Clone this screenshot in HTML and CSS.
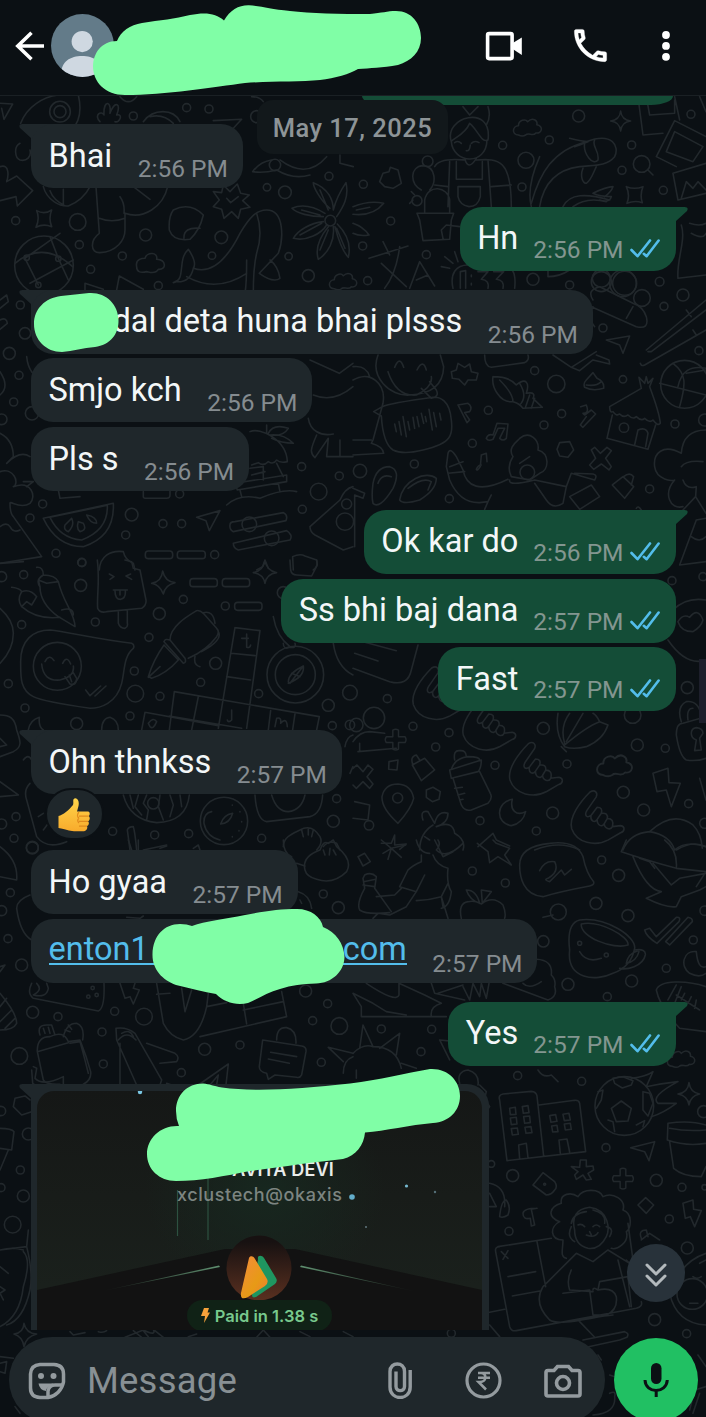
FILE: index.html
```html
<!DOCTYPE html>
<html lang="en">
<head>
<meta charset="utf-8">
<title>Chat</title>
<link rel="stylesheet" href="styles.css">
</head>
<body>
<svg width="0" height="0" class="defs">
  <defs>
    <symbol id="ticks" viewBox="0 0 30 19"><path d="M1.5 11L7.5 17.2L20 1.5M13.8 14.8L16.6 17.2L28.6 1.5" fill="none" stroke="#53bdeb" stroke-width="2.6" stroke-linejoin="round" stroke-linecap="round"/></symbol>
    <symbol id="tail-in" viewBox="0 0 36 30"><path d="M3.500 0H36V30H12V14L1 4Q-1 0 3.500 0Z" fill="#1f272b"/></symbol>
    <symbol id="tail-out" viewBox="0 0 36 30"><path d="M32.500 0H0V30H24V14L35 4Q37 0 32.500 0Z" fill="#144d37"/></symbol>
    <symbol id="star" viewBox="0 0 24 24" overflow="visible"><path d="M12 1Q13 11 23 12Q13 13 12 23Q11 13 1 12Q11 11 12 1Z"/></symbol>
    <symbol id="cloud" viewBox="0 0 30 20" overflow="visible"><path d="M6 18C-1 18 0 9 6 9C6 3 13 2 15 5C20 0 25 4 24 8C31 9 29 17 23 16C20 20 16 15 13 18C10 20 8 19 6 18Z"/></symbol>
    <symbol id="plus" viewBox="0 0 24 24" overflow="visible"><path d="M9 2Q12 0 15 2V9H22Q24 12 22 15H15V22Q12 24 9 22V15H2Q0 12 2 9H9Z"/></symbol>
    <symbol id="shaka" viewBox="0 0 54 54" overflow="visible"><path d="M20 2C25 -1 28 3 26 7L17 20C14 25 17 28 21 25C20 30 24 33 27 29C27 35 32 37 34 33C34 38 40 40 42 36L50 35C55 36 54 41 50 42L38 49C25 56 7 52 2 38C-1 27 10 12 20 2ZM21 25L27 17Q33 17 31 23L27 29M31 23Q38 22 37 28L34 33M37 28Q44 28 42 36"/></symbol>
  </defs>
</svg>
<main class="screen">
  <svg class="wallpaper" viewBox="0 0 706 1417" aria-hidden="true">
    <g transform="translate(0 0) scale(.3333)">
      <path d="M62 370C80 320 130 290 175 285M235 285C250 350 225 380 215 390M0 310L38 312L12 358L5 325M60 430C40 440 45 475 60 480C80 485 95 470 90 450M0 500C30 490 25 530 20 545L50 528L98 572L52 618L48 590L0 602M130 560C140 600 180 620 205 618C250 600 265 570 270 560M150 572Q160 600 195 617M190 568V614M288 560L298 700C270 720 270 760 300 758C350 755 375 720 375 690V640C430 660 490 620 503 560M298 655Q335 670 375 655M360 590Q375 610 372 640M400 560L450 598M300 365C280 345 305 330 312 345C310 300 335 300 330 340C345 300 365 310 350 345C370 340 360 370 345 365M430 365C460 325 520 325 540 365M450 350Q490 340 520 370M640 362L725 358L700 385M360 290Q385 320 410 290M110 632Q133 645 155 630Q145 655 155 680Q130 670 108 682Q120 655 110 632M520 630Q570 605 610 645Q600 690 570 718Q520 725 508 690Q505 650 520 630M552 715Q550 680 600 685M640 575L665 578L670 555L690 575L712 552L722 580L748 585L728 602L750 622L722 628L715 655L695 635L672 655L665 628L640 620L658 600ZM680 595L692 608L715 590M520 848C560 840 530 780 565 748C580 770 590 790 580 805C650 830 700 740 720 700C750 650 770 630 800 630C855 630 850 720 835 760L778 820Q820 850 840 835Q835 800 810 780M580 805Q570 850 525 845M560 830Q650 880 740 820M740 780Q740 850 735 880M770 640Q790 700 770 760Q760 800 760 880M990 625C960 600 940 560 940 548C985 565 1000 600 1000 630C1010 590 1030 560 1038 548C1048 590 1030 620 1010 650M970 650C930 650 890 640 876 625C910 610 950 625 975 640M970 665C930 670 895 690 880 715C920 725 965 700 980 675M985 680C960 710 945 745 955 778C985 760 1005 720 1000 680M1005 680C1015 720 1025 750 1045 772C1055 730 1035 695 1012 672M960 570L985 630M905 630L960 645M900 705L965 670M960 750L985 690M1035 745L1010 685M758 515Q780 485 815 480M830 510Q790 520 758 515M840 480Q920 540 980 470M830 510Q880 540 930 525M1020 465V490L1060 500M755 290Q780 290 790 305M45 790Q130 720 218 800M75 775L180 700M90 850L220 780M75 775L115 855M175 775L150 710M175 775L205 840"/>
      <path d="M255 870V850L310 868M350 870L358 828L430 868M410 800C405 775 430 775 435 775C440 755 475 755 470 778C500 780 500 810 475 808C465 825 445 815 440 815C420 820 410 815 410 800"/>
      <circle cx="180" cy="335" r="31"/><circle cx="180" cy="335" r="18"/><circle cx="560" cy="323" r="12"/><circle cx="627" cy="327" r="12"/><circle cx="400" cy="348" r="12"/><circle cx="770" cy="350" r="18"/><circle cx="987" cy="529" r="12"/><circle cx="801" cy="562" r="11"/><circle cx="855" cy="577" r="19"/><circle cx="825" cy="495" r="17"/><circle cx="47" cy="662" r="12"/><circle cx="233" cy="666" r="25"/><circle cx="238" cy="734" r="12"/><circle cx="367" cy="768" r="12"/><circle cx="437" cy="705" r="18"/><circle cx="272" cy="808" r="12"/><circle cx="664" cy="712" r="19"/><circle cx="636" cy="767" r="11"/><circle cx="991" cy="662" r="16"/><circle cx="866" cy="769" r="11"/><circle cx="925" cy="827" r="18"/><circle cx="475" cy="857" r="12"/><circle cx="132" cy="796" r="88"/><circle cx="80" cy="773" r="8"/><circle cx="175" cy="776" r="8"/><circle cx="115" cy="855" r="8"/>
      <use href="#cloud" x="985" y="810" width="90" height="65"/>
    </g>
    <g transform="translate(353 0) scale(.3333)">
      <path d="M295 425C270 350 420 310 405 420C385 430 375 390 350 370C335 405 300 415 295 425C300 490 400 500 402 420M305 428Q315 420 325 430M355 430Q365 420 378 428M340 452Q350 455 352 435M335 475Q345 515 370 475M245 500C260 470 330 480 335 480M370 480C440 475 475 480 475 620M290 485L285 620M405 480L415 620M310 485V538H388V485M315 560H382V590Q375 620 348 620Q320 615 315 590ZM245 555L285 560M415 560L475 555M330 320L350 345L375 320M405 320Q415 350 400 375M215 640V600C225 550 285 560 290 600V640M192 640H302L295 660L290 718L210 722L200 660ZM270 715L265 690L280 675L320 680M205 570C170 550 170 500 210 497C250 500 250 550 230 570M180 600L170 610M185 585L175 575M80 545L90 520L108 515L112 502L135 510L145 550L120 565L95 560ZM0 620Q50 600 92 610Q60 650 0 643M10 630L50 622M0 670Q30 680 48 705Q20 710 0 700M48 775L165 738M90 725L110 765M140 740Q130 820 95 865M85 790L160 860M170 865L200 785L245 858M190 840L225 825M265 800L290 805M275 770L300 790M305 755L315 785M300 865C290 820 310 795 345 795H440C480 795 490 820 485 865M560 470Q520 560 535 620M535 610C560 520 600 450 700 425C780 395 800 440 785 470C760 500 720 495 680 500C600 510 570 560 560 620M650 415Q690 425 705 425Q680 435 665 440M695 430C690 460 720 500 735 480C740 450 715 440 725 420M690 505C680 530 690 550 700 550C715 540 720 520 730 500M630 620C650 580 700 580 770 600M660 620Q700 590 760 605M740 600Q770 610 775 590Q740 590 720 580Q760 560 780 560Q775 575 755 590M820 560Q845 570 870 560Q860 585 868 608Q845 600 822 610Q832 585 820 560M855 290L870 405L930 400M965 290L980 360M880 290L890 345L965 340V300M965 362L1059 410M965 362L910 470L970 500M965 395L1050 440L1020 485L940 455ZM1059 490L960 520L975 600L1059 580M985 595L1000 545L1020 565L1035 545L1059 570M1040 290L1059 335M985 675C1000 720 970 780 975 835L1059 825M1010 670Q1040 680 1059 670M1015 700Q1050 720 1059 700M885 510L900 525M585 830V800M585 830Q620 830 650 810"/>
      <circle cx="677" cy="348" r="18"/><circle cx="449" cy="436" r="12"/><circle cx="589" cy="420" r="12"/><circle cx="519" cy="481" r="24"/><circle cx="507" cy="561" r="12"/><circle cx="836" cy="435" r="12"/><circle cx="807" cy="511" r="12"/><circle cx="866" cy="492" r="25"/><circle cx="931" cy="571" r="12"/><circle cx="1014" cy="343" r="12"/><circle cx="192" cy="602" r="15"/><circle cx="224" cy="484" r="16"/><circle cx="31" cy="553" r="12"/><circle cx="113" cy="663" r="12"/><circle cx="29" cy="738" r="12"/><circle cx="220" cy="764" r="12"/><circle cx="44" cy="842" r="12"/><circle cx="540" cy="838" r="18"/><circle cx="745" cy="835" r="27"/><circle cx="815" cy="850" r="36"/><circle cx="920" cy="845" r="13"/><circle cx="650" cy="855" r="12"/>
      <path d="M322 865V815L338 812V865M355 825V830M355 850V855M375 815H405L385 838Q410 840 405 865M422 815H452L430 838Q455 840 450 865"/>
      <use href="#cloud" x="478" y="348" width="92" height="65"/><use href="#star" x="770" y="330" width="66" height="66"/>
    </g>
    <g transform="translate(0 280) scale(.3333)">
      <path d="M80 230C85 280 110 290 125 300M0 60L20 45L25 65L0 85M0 120Q20 110 22 130L0 148M0 275Q30 320 0 345M925 415C930 450 960 470 1000 462M930 240L1018 280L1059 250M940 345Q1000 370 1059 320M950 465C930 510 930 520 945 533L985 475L980 530H1059M1020 530V480M800 435V460M750 455C780 440 860 480 862 545Q840 550 830 540Q820 555 805 545Q790 560 775 548L755 555M750 565L790 560V600M755 585L795 575M830 550L850 590M705 610L860 585V605L712 630ZM720 630L725 650M835 610L840 635M680 675Q720 640 780 655Q850 625 890 635M805 460Q820 430 865 445Q850 470 810 465Q850 460 880 490Q845 490 815 475M130 715L340 670Q345 770 250 800Q170 800 130 715M150 712L322 676Q325 750 245 780Q180 775 150 712M195 735Q190 750 205 755Q225 735 215 715ZM235 725Q228 745 240 755Q262 750 250 730ZM260 705Q270 730 290 730Q290 710 260 705M0 460Q40 480 40 530L20 550M0 575C40 560 60 610 40 620C95 600 110 650 90 670C60 690 30 660 30 670Q30 700 40 710L125 830L0 850M0 740Q20 725 30 740Q40 760 60 750M20 550Q60 510 90 530M70 605H100L80 620M175 630L180 655L240 650M430 635V650Q430 655 440 655H500Q510 655 510 645V630M590 712L660 692L628 752L618 722ZM298 870C300 830 330 810 370 815Q375 840 400 850L405 870M690 735Q690 725 705 725L850 698Q865 705 858 722L700 755Q688 750 690 735M700 790L860 752Q880 765 870 780L715 810Q700 805 700 790M930 740L1020 660Q1035 625 1059 620M930 740Q930 755 945 765L1030 810L1059 800M880 870L878 830Q900 820 915 828L950 840Q955 860 940 870M795 840L788 860L770 870M795 840L805 865"/>
      <rect x="436" y="813" width="82" height="23" rx="9"/><rect x="532" y="813" width="84" height="23" rx="9"/>
      <circle cx="644" cy="824" r="12"/><circle cx="61" cy="75" r="12"/><circle cx="28" cy="220" r="18"/><circle cx="57" cy="286" r="12"/><circle cx="75" cy="160" r="17"/><circle cx="41" cy="366" r="12"/><circle cx="96" cy="400" r="20"/><circle cx="5" cy="418" r="16"/><circle cx="128" cy="672" r="12"/><circle cx="90" cy="714" r="12"/><circle cx="395" cy="704" r="19"/><circle cx="377" cy="765" r="12"/><circle cx="489" cy="731" r="12"/><circle cx="545" cy="731" r="12"/><circle cx="168" cy="820" r="12"/><circle cx="245" cy="847" r="12"/><circle cx="905" cy="560" r="12"/><circle cx="1018" cy="588" r="12"/><circle cx="956" cy="635" r="25"/><circle cx="907" cy="688" r="12"/><circle cx="748" cy="733" r="22"/><circle cx="815" cy="775" r="22"/><circle cx="1035" cy="725" r="26"/><circle cx="1040" cy="672" r="15"/><circle cx="539" cy="642" r="12"/>
    </g>
    <g transform="translate(353 280) scale(.3333)">
      <path d="M75 225C50 290 110 350 170 345Q270 340 272 260L262 225M105 275Q130 350 190 345Q240 320 235 290M125 262Q140 225 152 262M192 270Q210 235 220 270M205 325L235 355Q260 350 250 330L230 305M88 380L62 395L85 408Q90 490 120 510Q150 525 210 510C300 490 300 460 295 420C290 360 260 350 240 352Q110 370 88 380M125 432L130 455M138 425L145 465M150 410L160 470M165 425L170 450M180 412L185 445M192 410L198 440M205 400L212 430M217 410L220 425M228 388L238 450M242 398L250 440M260 400L264 420M0 260Q40 255 50 290M0 300C50 270 100 310 90 370L60 480L55 490Q90 500 92 520L0 525M0 480H55M295 275L310 270L315 250L335 262L350 252L355 275L375 280L370 300L345 300L335 315L318 298L298 295ZM395 225Q395 260 415 262L515 248Q530 240 525 225M600 225L655 262L730 215M655 262L680 272L720 240L770 252L768 240L730 225M420 290Q470 290 490 315C520 290 530 310 520 340C545 335 545 345 540 355L568 382L510 385Q500 370 480 365C440 370 415 320 420 290M440 300Q480 340 480 365M500 310Q525 350 500 375M530 345L518 380M545 355L535 385M315 375L345 370Q360 380 350 395L335 398L350 420L342 428ZM400 475Q405 460 420 465L432 430L465 432L460 475Q450 485 440 475L450 455L455 445H435L420 478Q405 485 400 475M385 525L382 560Q372 575 370 568Q375 555 385 555M385 525L400 520L402 545M700 300L720 278L732 295Q755 305 752 325Q720 335 695 322Q690 310 700 300M700 315Q730 320 745 305M683 380L700 375Q710 400 690 400L695 405L715 390L728 402L690 442L682 435L700 410M865 325L770 380Q770 400 780 395Q790 410 800 402Q812 415 825 405Q840 420 850 410Q865 425 875 415Q890 430 900 420Q915 440 922 430Q920 400 890 320M865 325L858 292L875 310L880 290L885 310L900 295L890 320M778 405L762 475L885 508L908 435M845 495L855 450Q880 440 885 460L878 500M880 210L1059 60M885 215L895 215L1059 90M862 250Q865 260 875 255L1059 150M1000 90L1015 110M1020 150L1030 165M760 180L830 168L810 220L800 195ZM715 80L850 140Q890 150 880 110Q870 80 840 70L740 20Q700 30 720 60M720 80Q700 110 725 140M820 115L840 80M920 310L1059 345M960 250C1000 280 1000 310 980 380M1000 280L1059 270M975 320Q990 250 1059 265M1059 450Q990 450 985 520C930 490 900 520 905 560C910 600 960 605 965 600C930 640 950 690 990 680M985 560Q1000 540 1050 545M990 600Q1000 630 1030 620L1028 650L1059 700M1028 650L990 690M1030 720L1059 715M980 855L1030 720M980 855L1059 845M1015 770Q1040 790 1059 770M620 488L650 485L662 510L645 532L620 528L612 508ZM715 510L725 502L742 520L762 502L775 512L758 535L775 560L768 570L745 552L722 568L710 555L728 535ZM778 615L810 590L842 620L815 655ZM812 590Q830 575 842 590L835 615M285 520Q290 500 310 530L330 570C340 620 380 640 465 598M285 520L280 560L290 600Q320 670 380 668L405 665L415 645M290 560L330 545M285 580L335 575M405 665L395 688M470 600Q465 620 545 600L640 620L630 670Q600 690 580 660L545 610M640 620L655 580L725 600Q735 585 720 582L665 580M650 650L715 615L740 650L680 688ZM480 530C460 500 500 480 500 475C530 450 560 480 555 510C590 520 590 570 560 580L530 600L475 590Q460 560 480 530M500 550L530 530M60 610Q70 560 110 560Q145 570 120 625Q80 690 60 670Q55 650 60 610M75 610Q85 580 115 590M140 660C150 600 220 570 250 595Q250 630 200 660Q150 675 140 660M165 625Q210 590 235 605L225 630M0 625L35 640L30 655L5 645V800M850 685Q855 675 865 690"/>
      <circle cx="990" cy="45" r="18"/><circle cx="933" cy="79" r="12"/><circle cx="750" cy="144" r="12"/><circle cx="867" cy="54" r="25"/><circle cx="810" cy="10" r="40"/><circle cx="745" cy="5" r="30"/><circle cx="1038" cy="212" r="12"/><circle cx="545" cy="272" r="12"/><circle cx="610" cy="312" r="26"/><circle cx="810" cy="298" r="11"/><circle cx="626" cy="401" r="12"/><circle cx="573" cy="435" r="12"/><circle cx="406" cy="391" r="12"/><circle cx="358" cy="490" r="12"/><circle cx="184" cy="552" r="12"/><circle cx="21" cy="573" r="20"/><circle cx="289" cy="656" r="12"/><circle cx="966" cy="432" r="12"/><circle cx="890" cy="627" r="12"/><circle cx="995" cy="313" r="72"/><circle cx="813" cy="443" r="14"/><circle cx="523" cy="577" r="22"/><circle cx="1055" cy="420" r="18"/>
    </g>
    <g transform="translate(0 560) scale(.3333)">
      <path d="M292 0C300 60 290 110 293 145Q300 160 320 155L425 145Q440 135 438 120L420 30L400 25L395 5L375 0M355 155V190Q360 205 375 205Q385 200 382 190V153M328 42L342 50L330 58M392 42L378 48L395 58M340 90H382M345 92Q345 118 362 118Q378 115 376 92M360 92V105M110 22Q130 20 130 45Q105 60 120 80L115 60L140 70L175 65Q165 45 130 45M120 80Q120 130 175 170L225 200C225 160 190 130 175 65M35 82Q60 85 65 95Q50 120 65 140L80 125L95 135L110 110Q90 85 65 95M65 140Q110 180 180 172M185 150Q220 140 220 165M455 70Q485 65 488 33Q495 65 525 68Q495 75 490 102Q480 75 455 70M760 38Q790 32 795 2Q800 32 830 38Q800 42 795 70Q790 42 760 38M870 0L872 30Q875 45 890 45L935 48L952 15L950 0M0 10L70 5M62 310C60 240 100 210 150 210C200 215 280 235 395 250Q405 255 400 265C370 290 375 330 365 370C350 430 300 445 270 445C200 435 130 425 100 410C60 390 62 350 62 310M125 312Q130 365 180 360Q225 350 220 318M135 305Q148 280 162 302M188 310Q200 285 212 312M195 350L210 372Q230 378 230 355L218 335M208 345L215 365M257 390L270 407L302 378M285 408L318 378M445 350Q460 300 492 255L535 300Q500 340 455 355ZM445 352L480 320M492 245L550 310Q560 308 555 295L510 240Q495 235 492 245M510 240C510 200 560 170 590 152Q600 150 610 160L650 205Q660 215 650 230Q620 270 565 295M610 158Q640 150 645 190M655 215Q670 240 605 275M585 290Q580 315 600 320M705 203L780 212L740 505M705 203L655 505M693 280L765 287M680 350L752 360M523 395L958 470L950 510M523 395L508 510M595 410L575 510M435 457L655 497M435 457L425 510M508 468L725 505M812 452L805 510M885 462L878 510M445 490Q460 470 470 485Q460 510 450 500ZM740 222V262Q750 265 752 255M725 235H745M695 450V480Q685 490 682 480M825 500L830 475Q845 470 842 490Q860 470 862 500M865 365Q865 340 910 318Q915 350 865 370M910 318L870 370M875 340L900 350M820 170Q830 230 870 260M850 250Q850 270 870 262Q890 265 885 250M1000 250Q1010 320 1059 345M0 145Q40 180 40 220Q40 270 0 310M0 465C30 465 45 475 50 510C60 540 70 560 40 575L0 590M0 535L20 555L0 560M85 510Q90 480 118 472Q115 500 130 510M305 510Q305 475 330 472Q355 480 355 510M0 665L55 705L0 710M90 670Q70 690 80 720L110 830Q140 870 200 845M115 770L130 760M130 810L145 790M370 705Q390 780 470 788Q560 785 568 705M390 705L400 745M415 705L405 740L425 765M440 705L430 730L445 750L440 780M480 705L475 740L490 780M510 705L520 735L510 770M540 705L545 740M765 705Q770 780 800 785L930 770Q965 760 968 705M815 705Q830 755 865 755Q905 750 915 705M635 755Q610 760 612 790Q620 830 660 840M662 792Q670 765 698 760Q690 790 662 792M697 735V736M720 755V756M725 785V786M717 812V813M697 830V831M390 870L382 810Q385 800 400 800Q405 815 410 870M500 855L430 870M850 860C850 830 880 820 900 810Q935 790 960 830Q970 850 950 870M905 810L910 830M925 805V825M940 810L935 830M970 860Q985 840 1010 850L1020 870M1035 560Q1040 530 1059 525M1050 640L1059 620M70 600Q85 580 95 600"/>
      <rect x="570" y="56" width="82" height="24" rx="9"/><rect x="667" y="56" width="82" height="24" rx="9"/><rect x="704" y="127" width="82" height="24" rx="9"/>
      <circle cx="172" cy="319" r="72"/><circle cx="676" cy="138" r="12"/><circle cx="71" cy="44" r="12"/><circle cx="242" cy="76" r="18"/><circle cx="550" cy="118" r="12"/><circle cx="478" cy="161" r="18"/><circle cx="286" cy="186" r="12"/><circle cx="65" cy="194" r="12"/><circle cx="447" cy="232" r="12"/><circle cx="647" cy="310" r="18"/><circle cx="403" cy="333" r="12"/><circle cx="602" cy="367" r="12"/><circle cx="25" cy="371" r="12"/><circle cx="406" cy="401" r="25"/><circle cx="480" cy="409" r="12"/><circle cx="776" cy="401" r="12"/><circle cx="75" cy="444" r="12"/><circle cx="390" cy="468" r="12"/><circle cx="230" cy="491" r="18"/><circle cx="886" cy="344" r="85"/><circle cx="886" cy="344" r="60"/><circle cx="985" cy="436" r="18"/><circle cx="997" cy="497" r="12"/><circle cx="1050" cy="495" r="14"/><circle cx="1050" cy="398" r="22"/><circle cx="672" cy="783" r="71"/><circle cx="460" cy="730" r="17"/><circle cx="338" cy="814" r="12"/><circle cx="464" cy="825" r="12"/><circle cx="566" cy="821" r="12"/><circle cx="785" cy="835" r="12"/><circle cx="1010" cy="716" r="12"/><circle cx="1000" cy="784" r="18"/><circle cx="48" cy="770" r="12"/><circle cx="42" cy="835" r="12"/><circle cx="97" cy="862" r="18"/><circle cx="5" cy="792" r="15"/><circle cx="246" cy="8" r="12"/><circle cx="850" cy="98" r="18"/><circle cx="5" cy="50" r="15"/>
    </g>
    <g transform="translate(353 560) scale(.3333)">
      <path d="M0 325L110 365Q165 380 175 330L195 255M5 280L75 303M30 245L130 272M975 185Q990 160 1010 172Q1035 140 1050 180Q1045 200 1020 215Q985 215 975 185M1059 300Q1000 320 945 240M960 150Q1000 110 1059 120M970 525Q970 490 990 490L1059 470M970 525Q980 590 1000 600Q1030 605 1059 595M985 485Q970 440 1000 425Q1035 420 1045 465M1005 480Q1000 445 1020 445M1015 520Q1015 505 1030 503Q1050 505 1050 520L1040 535L1045 570L1025 572L1030 540Q1015 535 1015 520M615 460Q605 520 635 560Q660 570 700 560Q750 540 765 495L740 485Q700 500 635 555M650 460Q620 500 635 550M690 460L640 545M740 485Q730 465 720 460M625 560L640 575M0 545Q20 515 50 515L95 520M15 575L130 565M20 550V575M290 630L385 600Q385 625 375 635L295 655ZM295 628Q305 595 345 590Q380 590 380 600M305 600Q300 570 320 572Q340 570 340 590M300 655L325 735Q335 755 355 750L405 730Q420 715 412 700L380 635M305 685L328 682M315 705L335 700M320 720L330 718M108 605L135 600L132 630L107 628ZM178 615L215 595L245 630L205 662ZM180 615Q170 590 190 585L200 600M0 625L12 615L30 635L45 615L60 628L42 650L60 672L50 685L30 665L10 685L0 675M135 790Q85 745 87 710Q95 672 135 672Q175 675 182 715Q175 745 135 790M5 725L50 735L45 780L0 775M220 690L240 682L262 695L258 718L238 725L220 712ZM210 780Q200 750 225 755L245 790Q255 750 285 760Q285 790 250 800M240 795Q200 820 200 870M250 800Q300 780 305 820Q340 840 330 870M215 830L230 840M478 718C430 725 425 790 475 797Q510 790 518 755C490 770 470 750 478 718M375 860L420 820L430 840L470 858M900 640L945 625L948 668L982 670L955 740L940 690L912 695ZM85 850H115L125 825V855L160 852L140 868M545 870Q620 840 680 870M890 815Q960 750 1020 795Q1045 820 1048 865M810 870Q830 820 890 815Q950 825 965 870M1040 655L1059 720M965 870Q1000 840 1059 860"/>
      <use href="#shaka" x="175" y="318" width="165" height="165"/><use href="#shaka" x="325" y="410" width="165" height="165"/><use href="#shaka" x="465" y="545" width="165" height="165"/><use href="#shaka" x="650" y="690" width="165" height="165"/>
      <use href="#plus" x="94" y="505" width="68" height="68"/><use href="#cloud" x="728" y="572" width="115" height="85"/>
      <circle cx="103" cy="416" r="12"/><circle cx="63" cy="474" r="32"/><circle cx="10" cy="495" r="20"/><circle cx="180" cy="499" r="12"/><circle cx="288" cy="518" r="12"/><circle cx="248" cy="561" r="12"/><circle cx="426" cy="616" r="12"/><circle cx="571" cy="505" r="18"/><circle cx="642" cy="612" r="12"/><circle cx="839" cy="465" r="25"/><circle cx="853" cy="555" r="18"/><circle cx="937" cy="565" r="12"/><circle cx="811" cy="697" r="18"/><circle cx="872" cy="750" r="18"/><circle cx="1007" cy="731" r="12"/><circle cx="599" cy="759" r="18"/><circle cx="550" cy="813" r="12"/><circle cx="381" cy="782" r="12"/><circle cx="134" cy="714" r="15"/><circle cx="48" cy="796" r="14"/><circle cx="1003" cy="383" r="18"/><circle cx="957" cy="62" r="12"/><circle cx="1050" cy="50" r="12"/><circle cx="1055" cy="790" r="15"/>
    </g>
    <g transform="translate(0 840) scale(.3333)">
      <path d="M0 20Q55 60 50 120L0 110M90 165Q50 180 50 205Q60 280 95 300M850 0Q850 40 875 50M915 90Q905 50 960 30Q970 0 985 10L1000 0L1010 20Q1060 60 1040 95Q1000 135 950 118Q920 110 915 90M970 30L975 45M990 25L988 45M1000 30L1008 45M890 70L915 78M895 155Q930 165 935 205M900 180L905 190M0 460Q50 520 50 550Q40 570 0 570M0 500L20 475M0 545L35 510M15 565L45 535M0 380L15 375L0 395M95 430Q80 460 100 475L295 513Q315 505 312 430M110 430Q130 450 100 465Q140 475 145 445L140 430M360 430L375 475L390 470L400 492L418 450L400 445L405 430M470 430L490 550Q510 590 550 600Q600 590 620 500L625 460M470 463L510 460M545 445L555 515L575 450M600 590L860 530L845 455M730 490L740 552M730 510L850 485M620 500L680 488M112 635Q110 590 150 590Q190 570 205 605L240 600Q260 650 272 695Q275 720 250 733M112 635L130 720Q140 735 180 733M112 635L205 608M120 585Q110 555 140 555L155 555L165 585M130 565L135 580M145 562L150 580M190 590Q200 550 230 550Q255 560 248 600M195 570L210 575M205 555L215 568M210 610L240 605Q250 640 265 700M100 680L110 685L105 715Q130 740 190 710V740M95 690L98 730Q105 735 115 740M348 565Q380 560 405 580L485 720L480 735M348 565L350 600L410 735M360 610V735M365 580Q390 565 400 590M355 600Q380 570 408 600M440 610L525 640Q540 650 530 665L480 670M500 730L515 735M595 735L685 672L678 735M630 735L655 705L650 735M788 600L905 618Q920 620 918 635L905 705Q900 715 890 712L825 705L805 718L800 700Q778 695 778 680ZM830 600Q830 560 860 563Q890 570 888 610M812 637L890 650M805 657L868 670M985 622L1059 640M985 622L1030 665M1030 700Q1030 660 1059 650M45 775L75 768L90 780M45 775L40 800L65 825L95 815M385 0L395 30M415 0V30M500 18L480 25M580 25L595 15L600 30M380 232L420 235L430 228"/>
      <circle cx="97" cy="24" r="18"/><circle cx="31" cy="158" r="12"/><circle cx="5" cy="212" r="15"/><circle cx="24" cy="296" r="12"/><circle cx="65" cy="375" r="18"/><circle cx="98" cy="517" r="18"/><circle cx="174" cy="530" r="12"/><circle cx="344" cy="514" r="12"/><circle cx="432" cy="530" r="25"/><circle cx="306" cy="576" r="12"/><circle cx="58" cy="648" r="25"/><circle cx="310" cy="672" r="12"/><circle cx="614" cy="628" r="18"/><circle cx="720" cy="615" r="12"/><circle cx="544" cy="698" r="12"/><circle cx="938" cy="542" r="12"/><circle cx="983" cy="491" r="12"/><circle cx="1018" cy="558" r="25"/><circle cx="917" cy="453" r="18"/><circle cx="964" cy="667" r="12"/><circle cx="970" cy="162" r="12"/><circle cx="1015" cy="203" r="18"/><circle cx="278" cy="444" r="5"/><circle cx="265" cy="470" r="5"/><circle cx="290" cy="465" r="5"/>
    </g>
    <g transform="translate(353 840) scale(.3333)">
      <path d="M15 50L35 40L52 65L30 78ZM85 0L115 25L90 40M115 25L105 58M115 25L145 52M115 25L158 15M190 0Q200 40 230 40M255 0Q265 15 250 30Q280 60 330 10M205 45V65Q180 75 165 90L140 140L190 155L215 105M240 45Q250 75 285 85Q280 130 295 155Q290 200 265 205M190 182Q230 180 265 170M265 170L285 235M285 130L265 170L270 200M145 145L125 165L70 170M190 155L160 200L110 225L75 220L60 235M30 115L35 105Q55 95 70 110L65 145L115 215M30 115L35 145Q10 190 20 210Q40 225 110 218M30 135L65 140M32 125L68 118M245 0L270 50L300 35M325 235Q315 190 345 185C370 180 380 190 385 192Q420 165 450 195Q460 220 455 235M380 190Q350 180 340 150Q370 150 380 190M388 190L385 150L415 155ZM373 10L405 35L410 68L435 50L475 75L455 45L470 25L430 10L420 0M500 75C500 30 540 15 590 10Q670 0 690 50Q700 100 722 125Q725 135 710 138Q620 155 570 170C510 165 500 110 500 75M560 92Q575 60 605 65Q620 95 585 115Q570 120 590 125L625 90L635 105L655 88M820 0L805 35Q880 60 970 85Q975 30 935 0M970 30Q1020 0 1059 20M840 50Q880 150 925 155L880 175Q940 205 970 200L985 170L1040 150L1059 140M860 55L890 65L905 85M900 70L955 135L980 115L1059 100M970 85L1059 95L1030 140M570 232L600 225M650 330Q640 250 680 240C760 230 850 290 845 325Q835 380 780 400C730 425 640 420 650 330M685 252C740 240 830 290 825 315C780 330 680 290 685 252M845 330Q880 325 877 345C870 380 820 390 800 385M820 370Q825 340 855 332M820 370Q850 365 858 335M680 335Q700 370 745 355M875 270L890 265L910 290L970 232Q985 230 978 245L912 310Q880 290 875 270M938 305L1005 232Q1020 235 1018 245L950 315ZM1030 335C990 330 980 380 1010 400Q1040 415 1059 400M1059 380Q1035 390 1030 335M910 450C920 420 1000 420 1059 440M910 450Q920 500 980 565L1059 575M945 480L970 435M965 490L985 440M970 465L1040 510M995 460L985 480M1015 470L1005 490M1030 480L1025 505M450 430L585 480Q615 470 605 440Q610 420 595 405Q600 360 550 358M510 430Q530 450 565 425M0 460L25 500V530H280M0 460L60 490L100 515L160 525M40 430Q130 490 138 465V430M138 430L215 465L265 490Q230 500 235 530M235 430L245 460L335 480M255 460L330 435M330 440L350 480L360 430L380 470L385 430L400 475L408 430M260 600L310 605M260 600L290 660M20 625L30 555L60 620M60 620Q130 620 145 685M80 625L140 580L130 645M145 670L190 685M0 640Q30 610 60 620M10 690V715M555 690Q570 715 595 705L615 725M320 730Q310 695 345 690Q380 700 375 735M380 735L400 755L395 775L410 800L400 815"/>
      <circle cx="358" cy="93" r="12"/><circle cx="457" cy="129" r="12"/><circle cx="616" cy="216" r="24"/><circle cx="746" cy="60" r="12"/><circle cx="797" cy="106" r="18"/><circle cx="729" cy="190" r="18"/><circle cx="825" cy="227" r="18"/><circle cx="1021" cy="300" r="12"/><circle cx="940" cy="385" r="12"/><circle cx="836" cy="423" r="18"/><circle cx="645" cy="433" r="18"/><circle cx="763" cy="470" r="12"/><circle cx="571" cy="304" r="17"/><circle cx="85" cy="567" r="12"/><circle cx="236" cy="568" r="12"/><circle cx="204" cy="635" r="12"/><circle cx="680" cy="310" r="6"/><circle cx="760" cy="345" r="6"/><circle cx="1055" cy="212" r="14"/><circle cx="494" cy="707" r="12"/><circle cx="686" cy="724" r="12"/>
      <use href="#cloud" x="940" y="620" width="90" height="70"/>
    </g>
    <g transform="translate(0 1060) scale(.3333)">
      <path d="M0 205Q35 205 42 215L35 270L0 265M25 270L0 330M85 510L80 560L0 570M70 570Q40 560 0 570M70 575Q95 600 70 680Q60 770 0 800M80 560Q100 640 90 690Q70 780 20 795M0 620L25 640M0 680L15 690L0 700L10 720M42 822Q70 820 72 790Q78 820 110 822Q78 830 72 860Q68 830 42 822M0 890L40 895M0 910L20 905L15 940L0 935M45 1040L60 1060M210 815L220 825L255 818M295 815Q310 820 320 812M375 832L430 810Q470 830 460 808L490 832M400 812L425 832M430 812L445 830M565 830L590 822M770 832L790 810L810 832M900 815L930 830M1030 815L1059 830"/>
      <circle cx="61" cy="330" r="12"/><circle cx="70" cy="408" r="18"/><circle cx="38" cy="494" r="25"/><circle cx="85" cy="222" r="18"/><circle cx="3" cy="383" r="12"/><circle cx="3" cy="153" r="14"/>
    </g>
    <g transform="translate(353 1060) scale(.3333)">
      <path d="M440 120Q435 105 450 102L535 94Q550 95 552 108L572 288M440 120L462 302L698 275L680 130Q678 120 665 121L558 135M500 297L497 255L520 250L525 293M622 280L618 240L642 237L650 276M470 145L487 142L489 163L472 164ZM508 140L525 137L528 158L511 160ZM472 174L490 172L492 192L475 194ZM512 170L530 168L532 188L515 190ZM475 206L493 204L496 223L478 225ZM516 202L534 200L537 218L519 220ZM590 167L608 164L612 184L594 187ZM630 163L648 160L652 180L634 182ZM596 198L612 196L615 215L599 216ZM634 192L652 190L655 208L637 210ZM780 55L810 50L840 62L835 75L808 84L785 70ZM775 145L805 123L835 145L825 183L790 185ZM735 95L750 90L745 120L730 145M870 95L890 100L900 130L885 168L870 150ZM765 180L780 185L785 215M850 195L875 182L870 200M835 55Q880 50 900 35L880 80Q930 70 975 65Q890 110 915 130L970 130Q930 160 895 170M975 102Q1005 98 1008 68Q1012 98 1040 102Q1012 108 1008 135Q1005 108 975 102M945 190Q1010 180 1059 195M945 190L943 240Q1000 260 1059 250M950 205Q1000 215 1059 210M950 245L962 325Q990 350 1045 350L1059 320M833 263L905 245L888 302L875 275ZM655 320L680 322L682 300L700 300V320L720 318L722 330L705 340L715 358L700 360L690 345L670 358L665 345L675 335ZM540 375L570 338L605 365Q615 380 605 390Q595 405 580 405ZM855 435L878 413L902 435L880 460ZM990 430L1020 420L1022 448L1045 452L1025 500L1012 470L997 475ZM552 445L535 448L545 495L535 498L532 475Q510 480 510 460Q512 445 552 445M620 485C580 470 590 440 625 430C620 400 655 395 675 410C690 385 740 385 750 410C780 395 820 420 810 450C840 460 835 505 820 515C830 550 790 570 775 565M620 485C590 500 590 540 630 540C630 570 620 590 640 595M665 510Q650 450 710 442C770 450 770 510 760 530Q740 570 705 565Q665 555 665 510M655 490Q660 460 700 455M755 490Q760 460 720 450M655 500Q640 530 665 545M760 500Q785 505 770 530M675 495Q685 490 695 500M720 500Q730 490 740 500M710 515L715 525M700 525Q725 535 735 518M670 580L720 605L765 570L830 610M670 580L570 680Q540 730 590 780C620 800 720 770 780 765M655 630Q640 660 650 690L720 695M630 700L710 690L720 765M720 690Q720 680 735 690Q780 680 790 710Q795 750 760 765L720 765M735 690L740 665L825 650L835 740M820 600L840 620M795 600L830 740M825 490L840 600M435 560L595 535M428 575Q425 560 440 560M428 575L470 800Q475 815 490 812L850 745Q870 740 865 725M552 545L578 680M445 575L465 595M465 572L450 598M465 650L548 635M478 708L560 693M410 757L455 748M410 795L440 830M680 785L725 832M690 840L815 815Q830 820 822 832L800 840L700 862M410 370Q460 380 455 440M440 470Q445 420 460 420Q475 440 465 465Q450 475 440 470M410 400L430 440H410M865 540L890 520L920 540M865 535Q855 510 880 510L885 530M950 700Q970 790 1059 795M975 650Q1000 600 1059 580M1020 650Q1030 660 1045 650M1040 610L1059 600M1010 730H1035M770 1000Q790 990 785 1010Q790 1060 720 1065M1035 885L1059 920M1010 1050L1025 990L1059 980M1020 1060L1040 1000M735 885L745 900M770 945L785 950"/>
      <use href="#plus" x="776" y="322" width="68" height="68"/>
      <circle cx="814" cy="138" r="88"/><circle cx="479" cy="347" r="18"/><circle cx="415" cy="312" r="10"/><circle cx="759" cy="263" r="12"/><circle cx="910" cy="361" r="18"/><circle cx="987" cy="382" r="12"/><circle cx="949" cy="477" r="12"/><circle cx="468" cy="514" r="12"/><circle cx="1003" cy="564" r="18"/><circle cx="905" cy="779" r="18"/><circle cx="1001" cy="821" r="12"/><circle cx="1018" cy="702" r="46"/><circle cx="1052" cy="155" r="18"/><circle cx="295" cy="820" r="12"/><circle cx="575" cy="373" r="3"/><circle cx="1055" cy="382" r="8"/>
    </g>
  </svg>

  <header class="topbar">
    <svg class="back" width="30" height="30" viewBox="0 0 30 30"><path d="M29 15H3M16.500 1.800L2.800 15L16.500 28.200" fill="none" stroke="#fff" stroke-width="3.600"/></svg>
    <svg class="avatar" width="63" height="63" viewBox="0 0 63 63"><clipPath id="av"><circle cx="31.500" cy="31.500" r="31.500"/></clipPath><g clip-path="url(#av)"><rect width="63" height="63" fill="#637b89"/><circle cx="31.200" cy="27.600" r="10.600" fill="#cfd8e1"/><path d="M10 63C9 47 20 42 31 42S53 47 53 63Z" fill="#cfd8e1"/></g></svg>
    <div class="actions">
      <svg width="38" height="30" viewBox="0 0 38 30"><rect x="2.600" y="2.600" width="24.500" height="25" rx="1.500" fill="none" stroke="#fff" stroke-width="3.600"/><path d="M27 12.500L36.800 6.500V24L27 17.500Z" fill="#fff"/></svg>
      <svg class="call" width="43" height="43" viewBox="0 0 24 24"><path fill="#fff" stroke="#fff" stroke-width=".2" d="M6.540 5c.06.89.21 1.760.45 2.590l-1.200 1.200c-.41-1.200-.67-2.470-.76-3.790h1.510m9.860 12.020c.85.24 1.720.39 2.600.45v1.490c-1.320-.09-2.590-.35-3.800-.75l1.200-1.190M7.500 3H4c-.55 0-1 .45-1 1 0 9.390 7.610 17 17 17 .55 0 1-.45 1-1v-3.490c0-.55-.45-1-1-1-1.240 0-2.450-.2-3.570-.57-.1-.04-.21-.05-.31-.05-.26 0-.51.1-.71.29l-2.200 2.200c-2.830-1.450-5.150-3.760-6.590-6.590l2.200-2.200c.28-.28.36-.67.25-1.020C8.700 6.450 8.500 5.250 8.500 4c0-.55-.45-1-1-1z"/></svg>
      <svg class="more" width="8" height="30" viewBox="0 0 8 30"><g fill="#fff"><circle cx="4" cy="4" r="3.900"/><circle cx="4" cy="14.900" r="3.900"/><circle cx="4" cy="25.800" r="3.900"/></g></svg>
    </div>
    <svg class="name-cover" width="330" height="92" viewBox="92 4 330 92"><path fill="#80fea6" d="M93 66C93 54 101 41 117 41C121 31 130 25 142 23C160 20 175 19 190 15C205 12 216 13 224 20.500C230 10 239 5 249 5.300C262 6 270 9 290 11C310 13.500 340 14 370 14C382 13 387 11 396 11C412 11 421 24 421 38C421 52 411 61 398 65C382 68 370 68 358 69C350 74 335 78 320 80C300 82 270 81 245 83C215 87 165 95 125 95C105 95 93 82 93 66Z"/></svg>
  </header>

  <section class="chat">
    <div class="prev"></div>
    <div class="date">May 17, 2025</div>
    <div class="row in first"><svg class="tail"><use href="#tail-in"/></svg><div class="bubble"><span class="text">Bhai</span><time>2:56 PM</time></div></div>
    <div class="row out turn"><div class="bubble"><span class="text">Hn</span><time>2:56 PM</time><svg class="ticks"><use href="#ticks"/></svg></div><svg class="tail"><use href="#tail-out"/></svg></div>
    <div class="row in turn"><svg class="tail"><use href="#tail-in"/></svg><div class="bubble"><span class="text"><i class="gap-word"></i>dal deta huna bhai plsss</span><time>2:56 PM</time></div>
      <svg class="word-cover" width="86" height="60" viewBox="33 292 86 60"><path fill="#80fea6" d="M34 324C34 309 45 298 61 296L89 293C106 292 118 304 118.500 320C119 334 110 345 95 347C83 348 73 351 62 352C46 352 34 340 34 324Z"/></svg></div>
    <div class="row in"><div class="bubble"><span class="text">Smjo kch</span><time>2:56 PM</time></div></div>
    <div class="row in"><div class="bubble"><span class="text">Pls s</span><time>2:56 PM</time></div></div>
    <div class="row out turn"><div class="bubble"><span class="text">Ok kar do</span><time>2:56 PM</time><svg class="ticks"><use href="#ticks"/></svg></div><svg class="tail"><use href="#tail-out"/></svg></div>
    <div class="row out"><div class="bubble"><span class="text">Ss bhi baj dana</span><time>2:57 PM</time><svg class="ticks"><use href="#ticks"/></svg></div></div>
    <div class="row out"><div class="bubble"><span class="text">Fast</span><time>2:57 PM</time><svg class="ticks"><use href="#ticks"/></svg></div></div>
    <div class="row in turn reacted"><svg class="tail"><use href="#tail-in"/></svg><div class="bubble"><span class="text">Ohn thnkss</span><time>2:57 PM</time></div>
      <div class="reaction"><svg width="34" height="36" viewBox="0 0 34 36"><defs><linearGradient id="th" x1="0" y1="0" x2="0" y2="1"><stop offset="0" stop-color="#ffd54a"/><stop offset="1" stop-color="#f8ab2c"/></linearGradient></defs><path d="M1.500 19C6 18 12 13 16 8C17 5 15 2 18 1.200C21 1 22.500 5 21.500 9L20 14.500H31C33.500 15 33 18.500 31.500 19C33.500 20 33 23.500 31 24.300C32.500 25.500 32 28.500 30 29C31 31 29.500 34 27 34.200H17C12 34 9 32.500 1.500 31Z" fill="url(#th)"/><path d="M22 19.200H31.500M22 24.300H31M22 29.200H30M22 15C20 17 20 20 22 21M22 21C20.500 22.500 20.500 24.500 22 26" fill="none" stroke="#e08a1c" stroke-width="1.200"/></svg></div></div>
    <div class="row in after-reaction"><div class="bubble"><span class="text">Ho gyaa</span><time>2:57 PM</time></div></div>
    <div class="row in"><div class="bubble"><span class="text link">enton1<i class="gap-link"></i>com</span><time>2:57 PM</time></div>
      <svg class="link-cover" width="194" height="98" viewBox="152 907 194 98"><path fill="#80fea6" d="M152.500 954C153 936 164 924 180 924Q187 924 192 926C205 921 225 919 245 915C265 911 280 909 297 909C311 909 321 917 323 927C336 932 344 944 344.500 957C344 972 332 983 316 983.500C302 984 292 985 280 989C268 992 258 999 248 1003C236 1006 224 1002 216 994C204 992 190 988 176 985C162 980 152 969 152.500 954Z"/></svg></div>
    <div class="row out turn"><div class="bubble"><span class="text">Yes</span><time>2:57 PM</time><svg class="ticks"><use href="#ticks"/></svg></div><svg class="tail"><use href="#tail-out"/></svg></div>
    <div class="row in turn media"><svg class="tail"><use href="#tail-in"/></svg>
      <div class="card"><div class="photo">
        <svg class="scene" width="445" height="300" viewBox="37 1091 445 300">
          <defs><linearGradient id="sky" x1="0" y1="0" x2="0" y2="1"><stop offset="0" stop-color="#151716"/><stop offset=".35" stop-color="#181c19"/><stop offset=".65" stop-color="#1a201c"/></linearGradient><radialGradient id="glow"><stop offset="0" stop-color="#17271f"/><stop offset="1" stop-color="#17271f" stop-opacity="0"/></radialGradient><linearGradient id="orb" x1="0" y1="0" x2="0" y2="1"><stop offset=".1" stop-color="#171111"/><stop offset="1" stop-color="#5a3020"/></linearGradient><linearGradient id="ray" x1="1" x2="0"><stop offset="0" stop-color="#5f9070"/><stop offset="1" stop-color="#5f9070" stop-opacity="0"/></linearGradient><linearGradient id="ray2"><stop offset="0" stop-color="#5f9070"/><stop offset="1" stop-color="#5f9070" stop-opacity="0"/></linearGradient><linearGradient id="og" x1="0" y1="0" x2="1" y2="1"><stop offset="0" stop-color="#f58b3d"/><stop offset=".6" stop-color="#e79a16"/><stop offset="1" stop-color="#ef7a35"/></linearGradient></defs>
          <rect x="37" y="1091" width="445" height="300" fill="url(#sky)"/><ellipse cx="265" cy="1190" rx="120" ry="105" fill="url(#glow)"/>
          <path d="M37 1290L225 1249H295L482 1290V1391H37Z" fill="#121212"/>
          <path d="M100 1291.500L219 1265.500L220 1267Z" fill="url(#ray)"/><path d="M300 1267L301 1265.500L418 1292Z" fill="url(#ray2)"/>
          <path d="M177.500 1190V1236M208 1175V1240" stroke="#2d5140" stroke-width="1.200"/>
          <circle cx="259" cy="1268" r="32.500" fill="url(#orb)"/>
          <path d="M258 1259C257 1255 262 1255 264 1258L276 1278Q278 1281 275 1284L256 1297Q250 1299 253 1291Z" fill="#1f9660"/>
          <path d="M249 1258C250 1255 254 1256 255 1259L267 1279Q269 1283 265 1286L248 1297Q240 1301 241 1293Z" fill="url(#og)"/>
          <circle cx="140" cy="1092" r="2.200" fill="#7ac6e2"/><circle cx="352" cy="1197" r="2.800" fill="#63aecb"/><circle cx="406.500" cy="1186" r="1.600" fill="#76b9d0"/><circle cx="435" cy="1192" r="1.200" fill="#557078"/><circle cx="366" cy="1227" r="1.100" fill="#5d7177"/>
        </svg>
        <div class="payee">AVITA DEVI</div>
        <div class="handle">xclustech@okaxis</div>
        <div class="paid"><svg width="9" height="15" viewBox="0 0 9 15"><path d="M3 0H8L6.500 4.500H9L3 15L4 8H0Z" fill="#f6a23b"/></svg><span>Paid in 1.38 s</span></div>
      </div></div>
      <svg class="media-cover" width="316" height="114" viewBox="146 1068 316 114"><path fill="#80fea6" d="M176 1111C176 1095 187 1083.500 203 1083.500C210 1084 213 1086 222 1087.500C255 1092 300 1089 350 1083.500C380 1080 405 1073 430 1069C448 1068 460 1081 460 1096C460 1111 449 1122 433 1123C410 1125 385 1131 365 1132.500C364 1145 356 1156 343 1159C315 1162 280 1167 250 1171C225 1176 200 1181 176 1181C159 1181 147 1169 147 1154C147 1138 161 1125 179 1126Q176 1119 176 1111Z"/></svg>
    </div>
  </section>
  <div class="scrollbar"></div>
  <div class="jump"><svg width="22" height="26" viewBox="0 0 22 26"><path d="M2 3L11 12L20 3M2 14L11 23L20 14" fill="none" stroke="#b4babd" stroke-width="3" stroke-linecap="round" stroke-linejoin="round"/></svg></div>

  <footer class="composer">
    <div class="field">
      <svg class="sticker" width="38" height="38" viewBox="0 0 38 38"><g fill="none" stroke="#949b9f" stroke-width="3.500" stroke-linejoin="round"><path d="M12 2.500H26Q35.500 3 35.500 12V20C34 28 28 34 20 35.500H12Q2.500 35 2.500 26V12Q3 3 12 2.500Z"/><path d="M20 35V29Q21 23 27 23H35"/></g><circle cx="13" cy="14" r="3" fill="#949b9f"/><circle cx="25.500" cy="14" r="3" fill="#949b9f"/><path d="M10.500 21.500H26Q19 24 18 29Q11.500 28 10.500 21.500Z" fill="#949b9f"/></svg>
      <span class="placeholder">Message</span>
      <div class="tools">
        <svg width="24" height="37" viewBox="0 0 24 37"><path d="M22.200 8V25C22.200 39 2 39 2 25V9.500C2 -.5 16.500 -.5 16.500 9.500V24.500C16.500 30 8 30 8 24.500V9.500" fill="none" stroke="#949b9f" stroke-width="3.400"/></svg>
        <svg width="37" height="37" viewBox="0 0 37 37"><circle cx="18.500" cy="18.500" r="16.500" fill="none" stroke="#949b9f" stroke-width="3.200"/><path d="M13 11H25M13 15.800H25M13 11H16C22 11 22 20 15 20H13.500L21 27.500" fill="none" stroke="#949b9f" stroke-width="2.500"/></svg>
        <svg width="38" height="34" viewBox="0 0 38 34"><path d="M4 6.500H10L13.500 2.500H24.500L28 6.500H34Q36 6.500 36 8.500V30Q36 32 34 32H4Q2 32 2 30V8.500Q2 6.500 4 6.500Z" fill="none" stroke="#949b9f" stroke-width="3.600"/><circle cx="19" cy="19" r="6.500" fill="none" stroke="#949b9f" stroke-width="3.600"/></svg>
      </div>
    </div>
    <div class="mic"><svg width="26" height="36" viewBox="0 0 26 36"><rect x="8" y="1" width="10.500" height="21" rx="5.250" fill="#0b1014"/><path d="M2 18C2.500 32 23.500 32 24.300 18M13.200 28V35" fill="none" stroke="#0b1014" stroke-width="3"/></svg></div>
  </footer>
</main>
</body>
</html>
```
FILE: styles.css
```css
* { box-sizing: border-box; }
body { margin: 0; background: #0b1014; font-family: Roboto, sans-serif; }
.defs { position: absolute; }
.screen { position: relative; width: 706px; height: 1417px; overflow: hidden; display: flex; flex-direction: column; background: #0b1014; }
.wallpaper { position: absolute; left: 0; top: 0; width: 706px; height: 1417px; fill: none; stroke: #22282c; stroke-width: 4.8px; stroke-linejoin: round; stroke-linecap: round; }
.wallpaper use { stroke-width: 1.55px; }

.topbar { position: relative; z-index: 2; flex: none; height: 96px; display: flex; align-items: center; padding: 0 36px 4px 15px; background: #0b1014; border-bottom: 1px solid #1a2024; }
.avatar { margin-left: 6px; }
.actions { display: flex; align-items: center; margin-left: auto; }
.call { margin-left: 46px; }
.more { margin-left: 50px; }
.name-cover { position: absolute; left: 92px; top: 4px; }

.chat { position: relative; flex: none; height: 1234px; overflow: hidden; display: flex; flex-direction: column; }
.prev { flex: none; align-self: flex-end; width: 311px; height: 9px; margin-right: 33px; background: #144d37; border-radius: 0 0 22px 22px / 0 0 9px 9px; }
.date { position: absolute; left: 257px; top: 4px; width: 191px; height: 54px; border-radius: 16px; background: #12181b; color: #8d9497; font-size: 25.500px; font-weight: 500; line-height: 57px; text-align: center; letter-spacing: .5px; white-space: nowrap; }

.row { position: relative; flex: none; display: flex; margin-top: 4.75px; padding: 0 30.500px 0 31px; }
.row.first { margin-top: 19px; }
.row.turn { margin-top: 18.750px; }
.row.after-reaction { margin-top: 56px; }
.row.out { justify-content: flex-end; }
.tail { position: absolute; top: 0; width: 36px; height: 30px; }
.in .tail { left: 19px; }
.out .tail { right: 18.500px; }
.bubble { position: relative; display: flex; align-items: flex-start; height: 64px; padding: 0 15px 0 17.500px; border-radius: 22px; background: #1f272b; white-space: nowrap; }
.out .bubble { background: #144d37; padding-right: 16px; }
.text { margin-top: 12.500px; font-size: 32.500px; line-height: 38px; color: #f3f7f8; }
.bubble time { margin: 30px 0 0 25.500px; font-size: 24.500px; line-height: 29px; color: #858c90; }
.out .bubble time { margin: 28px 0 0 15px; color: #839690; }
.ticks { width: 30px; height: 19px; margin: 32px 0 0 6px; }
.gap-word { display: inline-block; width: 64px; }
.gap-link { display: inline-block; width: 194px; height: 1px; }
.link { position: relative; color: #53bdeb; border-bottom: 2px solid #53bdeb; line-height: 34px; margin-top: 13px; height: 33.500px; }
.word-cover { position: absolute; left: 33px; top: 2.500px; }
.link-cover { position: absolute; left: 152px; top: -11.500px; z-index: 1; }

.reaction { position: absolute; left: 45px; top: 58px; width: 59px; height: 52px; border-radius: 26px; border: 2px solid #0b1014; background: #1f272b; display: flex; align-items: center; justify-content: center; padding: 2px 1px 0 0; }

.card { width: 458px; height: 320px; padding: 7px 7px 0 6px; border-radius: 22px; background: #1f272b; }
.photo { position: relative; width: 445px; height: 300px; border-radius: 17px; overflow: hidden; display: flex; flex-direction: column; align-items: center; font-family: Inter, "Open Sans", sans-serif; }
.scene { position: absolute; left: 0; top: 0; }
.payee { position: relative; align-self: flex-start; width: 297px; margin-top: 67px; text-align: right; font-size: 18px; font-weight: 600; line-height: 24px; letter-spacing: .2px; color: #e9ecea; }
.handle { position: relative; align-self: flex-start; margin: 1px 0 0 140px; font-size: 18px; font-weight: 500; line-height: 24px; letter-spacing: .6px; color: #7d8581; }
.paid { position: relative; align-self: flex-start; display: flex; align-items: center; justify-content: center; gap: 5px; width: 145px; height: 31px; margin: 93px 0 0 150px; border-radius: 16px; background: #102216; color: #78c98d; font-size: 16.500px; font-weight: 600; white-space: nowrap; }
.media-cover { position: absolute; left: 146px; top: -16.250px; }

.scrollbar { position: absolute; right: 0; top: 659px; width: 7px; height: 64px; background: #1d1f2b; }
.jump { position: absolute; left: 626.500px; top: 1243.500px; width: 58px; height: 58px; border-radius: 50%; background: #28323a; display: flex; align-items: center; justify-content: center; padding-top: 4px; }

.composer { position: relative; flex: none; height: 87px; display: flex; padding: 7px 8px 0 9px; justify-content: space-between; }
.field { width: 596px; height: 86px; border-radius: 43px; background: #1f272b; display: flex; align-items: center; padding: 1px 23.500px 0 19px; }
.placeholder { margin-left: 21px; font-size: 36.500px; line-height: 42px; letter-spacing: .2px; color: #889094; }
.tools { margin-left: auto; display: flex; align-items: center; gap: 53px; }
.tools svg:last-child { margin-left: -11px; }
.mic { width: 84px; height: 84px; margin-top: 1px; border-radius: 50%; background: #21c063; display: flex; align-items: center; justify-content: center; }
```
